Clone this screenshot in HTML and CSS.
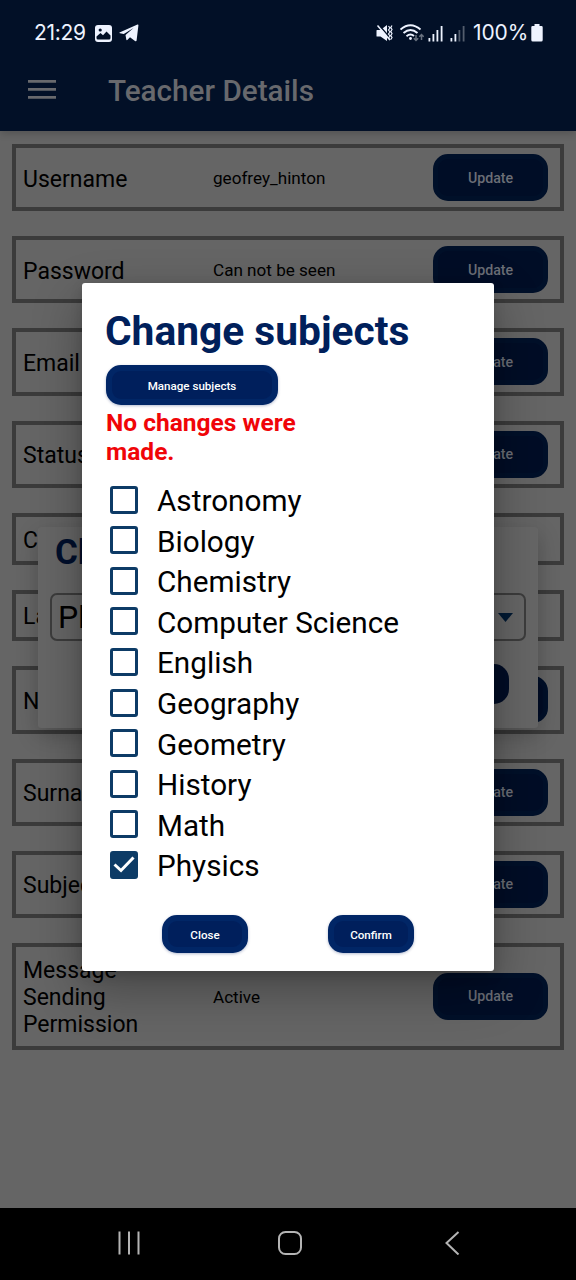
FILE: index.html
```html
<!DOCTYPE html>
<html lang="en">
<head>
<meta charset="utf-8">
<title>Teacher Details</title>
<link rel="stylesheet" href="styles.css">
</head>
<body>
<div class="screen">
  <header class="top">
    <div class="status">
      <span class="clock">21:29</span>
      <svg class="ic-photo" width="17" height="17" viewBox="0 0 17 17"><rect width="17" height="17" rx="3" fill="#eef3ff"/><circle cx="5.2" cy="5" r="1.6" fill="#021027"/><path d="M1.5 13V11.500L5.500 8L8 10.300L11.500 6.500L15.500 10.500V13Q15.500 14.500 14 14.500H3Q1.500 14.500 1.500 13Z" fill="#021027"/></svg>
      <svg class="ic-plane" width="20" height="18" viewBox="0 0 20 18"><path d="M.5 8.500L18.500.5Q19.600.2 19.400 1.500L17.600 16.500Q17.300 17.800 16 17L11 13.300L8.300 16Q7.500 16.500 7.300 15.400L6.500 11L14.500 4L4.800 10L1 9.300Q0 9 .5 8.500Z" fill="#eef3ff"/></svg>
      <svg class="ic-mute" width="17" height="18" viewBox="0 0 17 18"><path d="M1 6H4.500L11 1V17L4.500 12.500H1Q.5 12.500.5 12V6.500Q.5 6 1 6Z" fill="#eef3ff"/><path d="M2.500.5L15 15" stroke="#021027" stroke-width="1.500"/><path d="M1.500 1.500L14 16" stroke="#eef3ff" stroke-width="1.500"/><path d="M12.500 2l1.500 2-1.500 2 1.500 2-1.500 2 1.500 2-1.500 2 1.500 2M16 1.500l-1.200 2 1.200 2-1.200 2 1.200 2-1.200 2 1.200 2-1.200 2" fill="none" stroke="#eef3ff" stroke-width="1.200"/></svg>
      <svg class="ic-wifi" width="24" height="18" viewBox="0 0 24 18"><g fill="none" stroke="#eef3ff" stroke-width="1.900"><path d="M.5 5.500Q10.500-3 20.500 5.500"/><path d="M3.500 9Q10.500 3 17.500 9"/><path d="M6.500 12.200Q10.500 8.800 14 12"/></g><circle cx="10.500" cy="14.500" r="1.400" fill="#eef3ff"/><path d="M16 11v5.500M13.800 14.300L16 16.500l2.200-2.200M21.500 16v-5.500M19.300 12.700l2.200-2.200 2.200 2.200" fill="none" stroke="#68717f" stroke-width="1.500"/></svg>
      <svg class="ic-sig" width="15" height="17" viewBox="0 0 15 17" fill="#eef3ff"><path d="M.5 13h1.800v3.500H.5zM4.500 9h1.800v7.500H4.500zM8.500 5h1.800v11.500H8.500zM12.700 1h1.800v15.500h-1.800z"/></svg>
      <svg class="ic-sig2" width="15" height="17" viewBox="0 0 15 17" fill="#eef3ff"><path d="M.5 13h1.800v3.500H.5zM4.500 9h1.800v7.500H4.500z"/><path d="M8.500 5h1.800v11.500H8.500zM12.700 1h1.800v15.500h-1.800z" fill="#535d6d"/></svg>
      <span class="pct">100%</span>
      <svg class="ic-bat" width="12" height="18" viewBox="0 0 12 18"><path d="M3.500 0h5v2H10.500Q11.700 2 11.700 3.200V16Q11.700 17.500 10.200 17.500H1.800Q.3 17.500.3 16V3.200Q.3 2 1.500 2h2z" fill="#eef3ff"/></svg>
    </div>
    <div class="bar">
      <svg class="menu" width="28" height="19" viewBox="0 0 28 19" fill="#68696d"><path d="M0 0h28v2.800H0zM0 8h28v2.800H0zM0 16h28v2.800H0z"/></svg>
      <h1 class="title">Teacher Details</h1>
    </div>
  </header>

  <main class="rows">
    <div class="row"><span class="label">Username</span><span class="value">geofrey_hinton</span><button class="update">Update</button></div>
    <div class="row"><span class="label">Password</span><span class="value">Can not be seen</span><button class="update">Update</button></div>
    <div class="row"><span class="label">Email</span><span class="value"></span><button class="update">Update</button></div>
    <div class="row"><span class="label">Status</span><span class="value"></span><button class="update">Update</button></div>
    <div class="row row-short"><span class="label">C</span></div>
    <div class="row row-short"><span class="label">La</span></div>
    <div class="row"><span class="label">N</span><span class="value"></span><button class="update">Update</button></div>
    <div class="row"><span class="label">Surna</span><span class="value"></span><button class="update">Update</button></div>
    <div class="row"><span class="label">Subjec</span><span class="value"></span><button class="update">Update</button></div>
    <div class="row row-tall"><span class="label">Message Sending Permission</span><span class="value">Active</span><button class="update">Update</button></div>
  </main>

  <nav class="navbar">
    <svg width="24" height="24" viewBox="0 0 24 24" stroke="#b4b4b4" stroke-width="2"><path d="M2.500.5v23M12 .5v23M21.500.5v23"/></svg>
    <svg width="24" height="24" viewBox="0 0 24 24" fill="none" stroke="#b4b4b4" stroke-width="2"><rect x="1" y="1" width="22" height="22" rx="6.500"/></svg>
    <svg width="24" height="24" viewBox="0 0 24 24" fill="none" stroke="#b4b4b4" stroke-width="2"><path d="M19.500 1L7.500 12L19.500 23.500"/></svg>
  </nav>

  <section class="picker">
    <h2 class="picker-title">Ch</h2>
    <div class="select"><span>Ph</span><svg width="15" height="9" viewBox="0 0 15 9"><path d="M0 0h15L7.500 9z" fill="#021a33"/></svg></div>
    <div class="picker-foot"><button class="picker-btn"></button></div>
  </section>

  <section class="dialog">
    <h2 class="dialog-title">Change subjects</h2>
    <button class="btn manage">Manage subjects</button>
    <p class="error">No changes were made.</p>
    <ul class="subjects">
      <li><i class="box"></i>Astronomy</li>
      <li><i class="box"></i>Biology</li>
      <li><i class="box"></i>Chemistry</li>
      <li><i class="box"></i>Computer Science</li>
      <li><i class="box"></i>English</li>
      <li><i class="box"></i>Geography</li>
      <li><i class="box"></i>Geometry</li>
      <li><i class="box"></i>History</li>
      <li><i class="box"></i>Math</li>
      <li><i class="box checked"><svg width="22" height="17" viewBox="0 0 22 17"><path d="M1.500 8.500L8 14.500L20.500 1.500" fill="none" stroke="#fff" stroke-width="3"/></svg></i>Physics</li>
    </ul>
    <div class="actions"><button class="btn">Close</button><button class="btn">Confirm</button></div>
  </section>
</div>
</body>
</html>
```
FILE: styles.css
```css
* { box-sizing: border-box; }
body { margin: 0; font-family: Roboto, "Liberation Sans", sans-serif; color: #000; }
h1, h2, p, ul { margin: 0; padding: 0; }
button { border: 0; padding: 0; font-family: inherit; font-weight: 500; }
svg { display: block; flex: none; }

.screen { position: relative; width: 576px; height: 1280px; background: #656565; overflow: hidden; display: flex; flex-direction: column; }

.top { height: 131px; flex: none; background: #021027; box-shadow: 0 2px 8px rgba(0,0,0,.2); }
.status { height: 65px; padding: 1px 33px 0 34px; display: flex; align-items: center; color: #eef3ff; }
.clock { width: 61px; letter-spacing: -.3px; font-family: Inter, Roboto, sans-serif; font-size: 21px; line-height: 26px; }
.ic-plane { margin-left: 7px; }
.ic-mute { margin-left: auto; margin-right: 7px; }
.ic-wifi { margin-right: 4px; }
.ic-sig { margin-right: 7px; }
.ic-sig2 { margin-right: 8px; }
.pct { width: 56px; letter-spacing: -.1px; font-family: Inter, Roboto, sans-serif; font-size: 21px; line-height: 26px; }
.ic-bat { margin-left: 2px; }
.bar { height: 48px; padding-left: 28px; display: flex; align-items: center; }
.menu { margin-right: 52px; }
.title { font-size: 29.700px; font-weight: 500; line-height: 36px; color: #68696d; padding-top: 4px; }

.rows { flex: 1; padding: 13px 12px 0; display: flex; flex-direction: column; gap: 25px; }
.row { height: 67.200px; flex: none; border: 4px solid #3b3b3b; padding: 0 12px 0 7px; display: grid; grid-template-columns: 190px 1fr 115px; align-items: center; }
.row-short { height: 51.800px; }
.row-tall { height: 107px; }
.label { font-size: 23px; line-height: 27px; padding-top: 3px; }
.row-tall .label { width: 130px; padding-top: 3px; }
.value { font-size: 17.100px; line-height: 22px; padding-top: 1px; }
.update { height: 47px; border-radius: 15px; background: #000d26; border: 5px solid #001029; color: #6b6e76; font-size: 14.200px; }

.navbar { height: 72px; flex: none; background: #000; padding: 0 113px 3px 117px; display: flex; align-items: center; justify-content: space-between; }

.picker { position: absolute; left: 38px; top: 527px; width: 500px; height: 201px; padding: 8px 12px 0; background: #666; border-radius: 3px; box-shadow: 0 8px 22px rgba(0,0,0,.22); }
.picker-title { font-size: 35px; line-height: 36px; font-weight: 700; color: #000f2c; padding-left: 5px; }
.select { height: 48px; margin-top: 22px; border: 2px solid #3c3c3c; border-radius: 7px; padding: 0 11px 0 6px; display: flex; align-items: center; justify-content: space-between; font-size: 32px; }
.picker-foot { display: flex; justify-content: flex-end; padding: 23px 17px 0 0; }
.picker-btn { width: 115px; height: 40px; border-radius: 15px; background: #000d26; }

.dialog { position: absolute; left: 82px; top: 283px; width: 412px; height: 688px; padding: 24px 24px 0; background: #fff; border-radius: 3px; box-shadow: 0 18px 50px rgba(0,0,0,.32), 0 4px 12px rgba(0,0,0,.15); }
.dialog-title { font-size: 40.700px; line-height: 48px; font-weight: 700; color: #00205b; margin-left: -1px; }
.btn { display: block; width: 86px; height: 38px; border-radius: 15px; background: #001f5c; border: 6px solid #012666; padding-top: 1px; color: #fff; font-size: 11.600px; box-shadow: 0 1px 3px rgba(0,30,100,.3); }
.manage { width: 172px; height: 40px; margin-top: 10px; }
.error { width: 215px; margin-top: 3px; font-size: 24.500px; line-height: 29px; font-weight: 700; color: #f00508; }
.subjects { margin-top: 15px; list-style: none; }
.subjects li { height: 40.550px; padding-left: 4px; display: flex; align-items: center; gap: 19px; font-size: 29.700px; line-height: 40px; }
.box { width: 28px; height: 28px; flex: none; border: 3px solid #0d3b66; border-radius: 3px; margin-top: -3px; display: flex; align-items: center; justify-content: center; }
.checked { background: #0d3b66; }
.actions { display: flex; gap: 80px; padding-left: 56px; margin-top: 29px; }
```
